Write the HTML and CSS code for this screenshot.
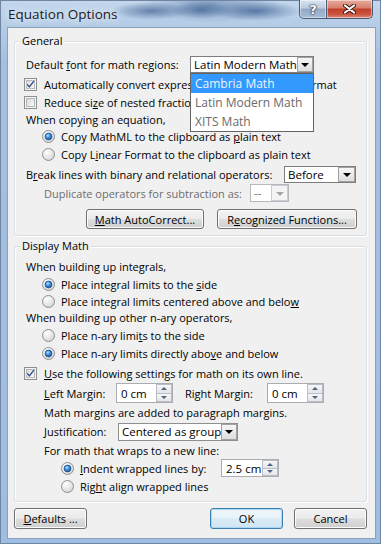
FILE: index.html
```html
<!DOCTYPE html>
<html>
<head>
<meta charset="utf-8">
<title>Equation Options</title>
<link rel="stylesheet" href="styles.css">
</head>
<body>
<svg class="defs" width="0" height="0" aria-hidden="true">
  <defs>
    <linearGradient id="boxBg" x1="0" y1="0" x2="1" y2="1">
      <stop offset="0" stop-color="#d6d6d6"/>
      <stop offset="1" stop-color="#fbfbfb"/>
    </linearGradient>
    <radialGradient id="radBg" cx="0.35" cy="0.3" r="0.85">
      <stop offset="0" stop-color="#ffffff"/>
      <stop offset="1" stop-color="#cfcfcf"/>
    </radialGradient>
    <radialGradient id="radDot" cx="0.4" cy="0.35" r="0.75">
      <stop offset="0" stop-color="#b4e3ff"/>
      <stop offset="0.45" stop-color="#3a8ee0"/>
      <stop offset="1" stop-color="#16488a"/>
    </radialGradient>
  </defs>
</svg>

<div class="window">
  <div class="titlebar">
    <span class="title">Equation Options</span>
    <div class="caption">
      <div class="cap-btn help">?</div>
      <div class="cap-btn close">
        <svg width="13" height="10" viewBox="0 0 13 10">
          <path d="M2 1.5 L11 8.5 M11 1.5 L2 8.5" stroke="#3a1710" stroke-width="4" stroke-linecap="round"/>
          <path d="M2 1.5 L11 8.5 M11 1.5 L2 8.5" stroke="#ffffff" stroke-width="2.2" stroke-linecap="round"/>
        </svg>
      </div>
    </div>
  </div>

  <div class="client">
    <div class="group general">
      <span class="group-title">General</span>

      <div class="row h20">
        <span class="txt w164">Default <u>f</u>ont for math regions:</span>
        <div class="combo combo-font">
          <span class="combo-text">Latin Modern Math</span>
          <span class="combo-btn"><i class="tri"></i></span>
          <ul class="dropdown">
            <li class="sel">Cambria Math</li>
            <li>Latin Modern Math</li>
            <li>XITS Math</li>
          </ul>
        </div>
      </div>

      <div class="row h20">
        <svg class="chk" width="13" height="13"><rect x="0.5" y="0.5" width="12" height="12" fill="#f5f5f5" stroke="#8e8f8f"/><rect x="2.5" y="2.5" width="8" height="8" fill="url(#boxBg)" stroke="#b4b8bd"/><path d="M3 6.2 L5.4 8.8 L10.2 2.8" fill="none" stroke="#ffffff" stroke-width="2.6"/><path d="M3 6.2 L5.4 8.8 L10.2 2.8" fill="none" stroke="#41588c" stroke-width="1.5"/></svg>
        <span>Automatically convert expressions to professional format</span>
      </div>

      <div class="row h17">
        <svg class="chk" width="13" height="13"><rect x="0.5" y="0.5" width="12" height="12" fill="#f5f5f5" stroke="#8e8f8f"/><rect x="2.5" y="2.5" width="8" height="8" fill="url(#boxBg)" stroke="#b4b8bd"/></svg>
        <span>Reduce si<u>z</u>e of nested fractions in display</span>
      </div>

      <div class="row h16">
        <span class="txt">When copying an equation,</span>
      </div>

      <div class="row h18 ind-radio">
        <svg class="rad" width="13" height="13"><circle cx="6.5" cy="6.5" r="6" fill="url(#radBg)" stroke="#8e8f8f"/><circle cx="6.5" cy="6.5" r="3.4" fill="url(#radDot)" stroke="#1b4c8a" stroke-width="0.8"/></svg>
        <span>Copy MathML to the clipboard as <u>p</u>lain text</span>
      </div>

      <div class="row h19 ind-radio">
        <svg class="rad" width="13" height="13"><circle cx="6.5" cy="6.5" r="6" fill="url(#radBg)" stroke="#8e8f8f"/></svg>
        <span>Copy L<u>i</u>near Format to the clipboard as plain text</span>
      </div>

      <div class="row h20">
        <span class="txt w258">B<u>r</u>eak lines with binary and relational operators:</span>
        <div class="combo combo-before">
          <span class="combo-text">Before</span>
          <span class="combo-btn"><i class="tri"></i></span>
        </div>
      </div>

      <div class="row h18">
        <span class="disabled w206 ind-text">Duplicate operators for subtraction as:</span>
        <div class="combo combo-dis">
          <span class="combo-text">--</span>
          <span class="combo-btn"><i class="tri"></i></span>
        </div>
      </div>

      <div class="row btn-row">
        <button class="btn btn-auto"><span><u>M</u>ath AutoCorrect...</span></button>
        <button class="btn btn-func"><span>R<u>e</u>cognized Functions...</span></button>
      </div>
    </div>

    <div class="group display">
      <span class="group-title">Display Math</span>

      <div class="row h17"><span class="txt">When building up integrals,</span></div>

      <div class="row h18 ind-radio">
        <svg class="rad" width="13" height="13"><circle cx="6.5" cy="6.5" r="6" fill="url(#radBg)" stroke="#8e8f8f"/><circle cx="6.5" cy="6.5" r="3.4" fill="url(#radDot)" stroke="#1b4c8a" stroke-width="0.8"/></svg>
        <span>Place integral limits to the <u>s</u>ide</span>
      </div>

      <div class="row h16 ind-radio">
        <svg class="rad" width="13" height="13"><circle cx="6.5" cy="6.5" r="6" fill="url(#radBg)" stroke="#8e8f8f"/></svg>
        <span>Place integral limits centered above and belo<u>w</u></span>
      </div>

      <div class="row h17"><span class="txt">When building up other n-ary operators,</span></div>

      <div class="row h18 ind-radio">
        <svg class="rad" width="13" height="13"><circle cx="6.5" cy="6.5" r="6" fill="url(#radBg)" stroke="#8e8f8f"/></svg>
        <span>Place n-ary limi<u>t</u>s to the side</span>
      </div>

      <div class="row h19 ind-radio">
        <svg class="rad" width="13" height="13"><circle cx="6.5" cy="6.5" r="6" fill="url(#radBg)" stroke="#8e8f8f"/><circle cx="6.5" cy="6.5" r="3.4" fill="url(#radDot)" stroke="#1b4c8a" stroke-width="0.8"/></svg>
        <span>Place n-ary limits directly abo<u>v</u>e and below</span>
      </div>

      <div class="row h20">
        <svg class="chk" width="13" height="13"><rect x="0.5" y="0.5" width="12" height="12" fill="#f5f5f5" stroke="#8e8f8f"/><rect x="2.5" y="2.5" width="8" height="8" fill="url(#boxBg)" stroke="#b4b8bd"/><path d="M3 6.2 L5.4 8.8 L10.2 2.8" fill="none" stroke="#ffffff" stroke-width="2.6"/><path d="M3 6.2 L5.4 8.8 L10.2 2.8" fill="none" stroke="#41588c" stroke-width="1.5"/></svg>
        <span><u>U</u>se the following settings for math on its own line.</span>
      </div>

      <div class="row h20 ind-text">
        <span class="w72"><u>L</u>eft Margin:</span>
        <div class="spin spin-margin">
          <span class="spin-text">0 cm</span>
          <span class="spin-btns"><span><i class="up"></i></span><span><i class="down"></i></span></span>
        </div>
        <span class="w82 right-lbl">Ri<u>g</u>ht Margin:</span>
        <div class="spin spin-margin">
          <span class="spin-text">0 cm</span>
          <span class="spin-btns"><span><i class="up"></i></span><span><i class="down"></i></span></span>
        </div>
      </div>

      <div class="row h19 ind-text"><span>Math margins are added to paragraph margins.</span></div>

      <div class="row h19 ind-text">
        <span class="w74"><u>J</u>ustification:</span>
        <div class="combo combo-just">
          <span class="combo-text">Centered as group</span>
          <span class="combo-btn"><i class="tri"></i></span>
        </div>
      </div>

      <div class="row h18 ind-text"><span>For math that wraps to a new line:</span></div>

      <div class="row h18 ind-radio2">
        <svg class="rad" width="13" height="13"><circle cx="6.5" cy="6.5" r="6" fill="url(#radBg)" stroke="#8e8f8f"/><circle cx="6.5" cy="6.5" r="3.4" fill="url(#radDot)" stroke="#1b4c8a" stroke-width="0.8"/></svg>
        <span class="w141"><u>I</u>ndent wrapped lines by:</span>
        <div class="spin spin-indent">
          <span class="spin-text">2.5 cm</span>
          <span class="spin-btns"><span><i class="up"></i></span><span><i class="down"></i></span></span>
        </div>
      </div>

      <div class="row h18 ind-radio2">
        <svg class="rad" width="13" height="13"><circle cx="6.5" cy="6.5" r="6" fill="url(#radBg)" stroke="#8e8f8f"/></svg>
        <span>Rig<u>h</u>t align wrapped lines</span>
      </div>
    </div>

    <div class="footer">
      <button class="btn btn-foot"><span><u>D</u>efaults ...</span></button>
      <span class="spacer"></span>
      <button class="btn btn-foot btn-default"><span>OK</span></button>
      <button class="btn btn-foot"><span>Cancel</span></button>
    </div>
  </div>
</div>
</body>
</html>
```

FILE: styles.css
```css
* { box-sizing: border-box; }
html, body { margin: 0; padding: 0; }
body {
  width: 381px;
  height: 544px;
  overflow: hidden;
  font-family: "Open Sans", "Noto Sans", "DejaVu Sans", sans-serif;
  font-size: 11px;
  color: #000;
  background: #a9c4e2;
}
.defs { position: absolute; width: 0; height: 0; }
u { text-decoration: underline; text-underline-offset: 1px; }

/* ---------- window frame ---------- */
.window {
  width: 381px;
  height: 544px;
  display: flex;
  flex-direction: column;
  border: 1px solid #6f86a3;
  background:
    radial-gradient(ellipse 40px 9px at 150px 10px, rgba(70,104,150,.75), rgba(70,104,150,0)),
    radial-gradient(ellipse 30px 9px at 200px 9px, rgba(60,96,145,.7), rgba(60,96,145,0)),
    radial-gradient(ellipse 45px 10px at 255px 10px, rgba(60,96,145,.75), rgba(60,96,145,0)),
    radial-gradient(ellipse 70px 18px at 210px 4px, rgba(80,115,160,.55), rgba(80,115,160,0)),
    linear-gradient(180deg, #c3d6ec 0px, #b4cbe6 26px, #a4c0e0 60px, #9fbde0 100%);
}
.titlebar {
  height: 26px;
  flex: none;
  display: flex;
  justify-content: space-between;
  align-items: flex-start;
  padding: 0 7px 0 7px;
}
.title {
  font-family: "Open Sans", "Noto Sans", sans-serif;
  font-size: 13.5px;
  line-height: 26px;
  color: #1b1b1b;
  text-shadow: 0 0 6px #e8f0fa, 0 0 10px #e8f0fa;
}
.caption { display: flex; margin-top: -1px; }
.cap-btn {
  height: 19px;
  border: 1px solid #4b5b73;
  border-top: none;
  display: flex;
  align-items: center;
  justify-content: center;
  box-shadow: inset 0 0 0 1px rgba(255,255,255,.45);
}
.help {
  width: 28px;
  border-radius: 0 0 0 5px;
  background: linear-gradient(#d8e3f0 0, #bccbdd 45%, #92a9c6 50%, #a7bcd6 100%);
  color: #fff;
  font-weight: 700;
  font-size: 13px;
  font-family: "DejaVu Sans", sans-serif;
  text-shadow: 0 0 1px #1e2a3a, 0 0 1px #1e2a3a, 0 0 2px #1e2a3a;
}
.close {
  width: 46px;
  border-left: none;
  border-radius: 0 0 5px 0;
  background: linear-gradient(#e9ab9e 0, #d8816f 42%, #c2402b 52%, #cb5540 80%, #dd8d79 100%);
}

/* ---------- client area ---------- */
.client {
  flex: 1;
  margin: 0 4px 4px 6px;
  background: #f0f0f0;
  border: 1px solid #8aa0bb;
  padding: 13px 8px 0 6px;
  display: flex;
  flex-direction: column;
}
.group {
  position: relative;
  border: 1px solid #d5dfe5;
  border-radius: 3px;
  box-shadow: inset 1px 1px 0 #fff, 1px 1px 0 #fff;
  padding-left: 9px;
}
.group-title {
  position: absolute;
  top: -9px;
  left: 5px;
  padding: 0 2px;
  line-height: 16px;
  background: #f0f0f0;
}
.general { padding-top: 12px; padding-bottom: 6px; }
.display { margin-top: 10px; padding-top: 11px; padding-bottom: 6px; }

.row { display: flex; align-items: center; white-space: nowrap; }
.h16 { height: 16px; }
.h17 { height: 17px; }
.h18 { height: 18px; }
.h19 { height: 19px; }
.h20 { height: 20px; }

.txt { padding-left: 2px; }
.ind-text { padding-left: 20px; }
.ind-radio { padding-left: 18px; }
.ind-radio2 { padding-left: 37px; }
.chk { flex: none; margin-right: 7px; }
.rad { flex: none; margin-right: 6px; }
.ind-radio2 .rad { margin-right: 6px; }

.w164 { width: 166px; flex: none; }
.w258 { width: 260px; flex: none; }
.w206 { width: 226px; flex: none; }
.w72 { width: 72px; flex: none; }
.w74 { width: 74px; flex: none; }
.w82 { width: 82px; flex: none; }
.w141 { width: 141px; flex: none; }
.right-lbl { margin-left: 12px; }
.disabled { color: #6d6d6d; }

/* ---------- combo boxes ---------- */
.combo {
  position: relative;
  display: flex;
  height: 17px;
  border: 1px solid #7d7d7d;
  background: #fff;
  flex: none;
}
.combo-text { flex: 1; padding-left: 3px; line-height: 15px; font-size: 11.5px; }
.combo-btn {
  width: 17px;
  border: 1px solid #a2a2a2;
  margin: 0;
  background: linear-gradient(#f6f6f6, #dedede);
  display: flex;
  align-items: center;
  justify-content: center;
}
.tri {
  display: block;
  width: 0; height: 0;
  border-left: 4px solid transparent;
  border-right: 4px solid transparent;
  border-top: 4px solid #000;
  margin-top: 1px;
}
.combo-font { width: 124px; }
.combo-before { width: 72px; }
.combo-dis { width: 39px; height: 18px; border-color: #b5b9bd; color: #6d6d6d; }
.combo-dis .combo-btn { border-color: #c9cdd1; background: #f4f4f4; }
.combo-dis .tri { border-top-color: #a5a5a5; }
.combo-just { width: 120px; height: 18px; border-color: #8f8f8f; }

.dropdown {
  position: absolute;
  top: 16px;
  left: -1px;
  width: 124px;
  margin: 0;
  padding: 0;
  list-style: none;
  background: #fff;
  border: 1px solid #646464;
  z-index: 5;
}
.dropdown li {
  height: 19px;
  line-height: 19px;
  padding-left: 4px;
  font-size: 12px;
  color: #6a6a6a;
}
.dropdown li.sel { background: #3399ff; color: #eef5ff; }

/* ---------- spin boxes ---------- */
.spin {
  display: flex;
  height: 20px;
  border: 1px solid #abadb3;
  background: #fff;
  flex: none;
}
.spin-margin { width: 57px; }
.spin-indent { width: 58px; height: 18px; }
.spin-text { flex: 1; padding-left: 4px; align-self: center; font-size: 11.5px; }
.spin-btns { width: 16px; display: flex; flex-direction: column; }
.spin-btns > span {
  flex: 1;
  border: 1px solid #b9bec6;
  background: linear-gradient(#f7f7f7, #e2e5e9);
  display: flex;
  align-items: center;
  justify-content: center;
}
.spin-btns > span + span { border-top: none; }
.up, .down {
  display: block;
  width: 0; height: 0;
  border-left: 3px solid transparent;
  border-right: 3px solid transparent;
}
.up { border-bottom: 3px solid #4d6185; }
.down { border-top: 3px solid #4d6185; }

/* ---------- buttons ---------- */
.btn {
  font: inherit;
  color: #000;
  padding: 0;
  height: 20px;
  border: 1px solid #707070;
  border-radius: 3px;
  background: linear-gradient(#f3f3f3 0, #ebebeb 48%, #dddddd 52%, #cfcfcf 100%);
  box-shadow: inset 0 0 0 1px #fcfcfc;
  display: flex;
  align-items: center;
  justify-content: center;
  flex: none;
}
.btn-row { margin-top: 7px; padding-left: 62px; gap: 13px; }
.btn-auto { width: 118px; }
.btn-func { width: 140px; }

.footer {
  display: flex;
  margin-top: 6px;
  gap: 11px;
}
.spacer { flex: 1; }
.btn-foot { width: 73px; height: 21px; }
.btn-default {
  border-color: #3c7fb1;
  background: linear-gradient(#f0f7fc 0, #e6f1f9 48%, #d8eaf6 52%, #cfe5f4 100%);
  box-shadow: inset 0 0 0 1px #a9d8f5;
}
```
